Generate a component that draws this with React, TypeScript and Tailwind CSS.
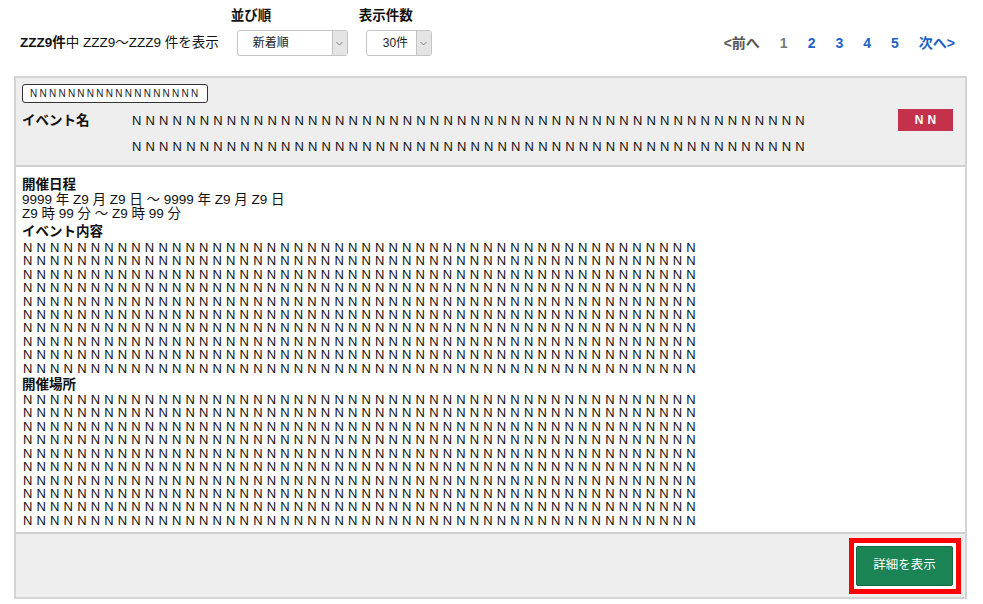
import React from 'react';

const FONT = { fontFamily: '"Liberation Sans", Arial, "Noto Sans CJK JP", sans-serif' };

const nLine = (count: number) => 'N'.repeat(count);

const SelectBox: React.FC<{ label: string; width: string; textPad: string }> = ({ label, width, textPad }) => (
  <div className={`flex h-[26px] ${width} rounded-[3px] border border-[#c4c4c4] bg-white overflow-hidden`}>
    <div className={`flex-1 flex items-center ${textPad} text-[12px] text-[#222]`}>{label}</div>
    <div className="w-[15px] flex items-center justify-center bg-[#e4e4e4] border-l border-[#c4c4c4]">
      <svg width="7" height="5" viewBox="0 0 7 5" fill="none">
        <path d="M0.5 1 L3.5 4 L6.5 1" stroke="#777" strokeWidth="0.9" />
      </svg>
    </div>
  </div>
);

const App: React.FC = () => {
  const contentLines = Array.from({ length: 10 }, (_, i) => i);
  const placeLines = Array.from({ length: 10 }, (_, i) => i);

  return (
    <div className="w-[983px] h-[604px] bg-white text-[#111]" style={FONT}>
      {/* 上部の件数・並び替え・ページ送り */}
      <div className="flex items-end pl-[20px] pr-[28px] pt-[7px]">
        <div className="text-[13.5px] leading-[18px] pb-[4px]">
          <span className="font-bold">ZZZ9件</span>中 ZZZ9～ZZZ9 件を表示
        </div>
        <div className="ml-[12px] flex flex-col">
          <div className="text-[13.5px] font-bold leading-[18px] mb-[5px]">並び順</div>
          <div className="ml-[6px]">
            <SelectBox label="新着順" width="w-[111px]" textPad="pl-[15px]" />
          </div>
        </div>
        <div className="ml-[11px] flex flex-col">
          <div className="text-[13.5px] font-bold leading-[18px] mb-[5px]">表示件数</div>
          <div className="ml-[7px]">
            <SelectBox label="30件" width="w-[66px]" textPad="pl-[16px]" />
          </div>
        </div>
        <div className="ml-auto flex items-center gap-[20px] text-[14px] font-bold leading-[18px] pb-[4px]">
          <span className="text-[#555]">&lt;前へ</span>
          <span className="text-[#777]">1</span>
          <span className="text-[#1b62c8]">2</span>
          <span className="text-[#1b62c8]">3</span>
          <span className="text-[#1b62c8]">4</span>
          <span className="text-[#1b62c8]">5</span>
          <span className="text-[#1b62c8]">次へ&gt;</span>
        </div>
      </div>

      {/* イベントカード */}
      <div className="mx-[14px] mt-[20px] w-[953px] border-2 border-[#d4d4d4]">
        {/* ヘッダー */}
        <div className="bg-[#eeeeee] px-[6px] pt-[6px] pb-[6px] border-b-2 border-[#cfcfcf]">
          <div className="flex w-fit h-[19px] items-center rounded-[3px] border border-[#333] bg-white pl-[7px] pr-[6px] text-[10px] leading-[12px] tracking-[2.25px] text-[#222]">
            {nLine(18)}
          </div>
          <div className="flex items-start mt-[5px]">
            <div className="w-[110px] text-[13.5px] font-bold leading-[25px]">イベント名</div>
            <div className="text-[13px] leading-[25.5px] tracking-[4.15px]">
              <div>{nLine(50)}</div>
              <div>{nLine(50)}</div>
            </div>
            <div className="ml-auto mr-[6px] mt-[1px] flex h-[22px] w-[55px] items-center justify-center bg-[#c4314b] text-[12px] font-bold tracking-[4px] text-white">
              <span className="pl-[4px]">NN</span>
            </div>
          </div>
        </div>

        {/* 本文 */}
        <div className="bg-white px-[6px] pt-[11px] pb-[5px] border-b-2 border-[#cfcfcf]">
          <div className="text-[13.5px] font-bold leading-[14px]">開催日程</div>
          <div className="text-[13.5px] leading-[14px] mt-[1px]">9999 年 Z9 月 Z9 日 ～ 9999 年 Z9 月 Z9 日</div>
          <div className="text-[13.5px] leading-[14px]">Z9 時 99 分 ～ Z9 時 99 分</div>
          <div className="text-[13.5px] font-bold leading-[14px] mt-[4px]">イベント内容</div>
          <div className="text-[13px] leading-[13.4px] tracking-[4.15px] mt-[2px] pl-[1px]">
            {contentLines.map((i) => (
              <div key={i}>{nLine(50)}</div>
            ))}
          </div>
          <div className="text-[13.5px] font-bold leading-[14px] mt-[3px]">開催場所</div>
          <div className="text-[13px] leading-[13.4px] tracking-[4.15px] mt-[1px] pl-[1px]">
            {placeLines.map((i) => (
              <div key={i}>{nLine(50)}</div>
            ))}
          </div>
        </div>

        {/* フッター */}
        <div className="bg-[#eeeeee] flex justify-end items-center h-[63px] pr-[4px]">
          <div className="border-[5px] border-[#ff0000] bg-white pl-[2px] pr-[3px] py-[3px]">
            <button className="flex h-[40px] w-[97px] items-center justify-center rounded-[2px] border border-[#156b44] bg-[#1b8455] text-[12.5px] text-white">
              詳細を表示
            </button>
          </div>
        </div>
      </div>
    </div>
  );
};

export default App;
